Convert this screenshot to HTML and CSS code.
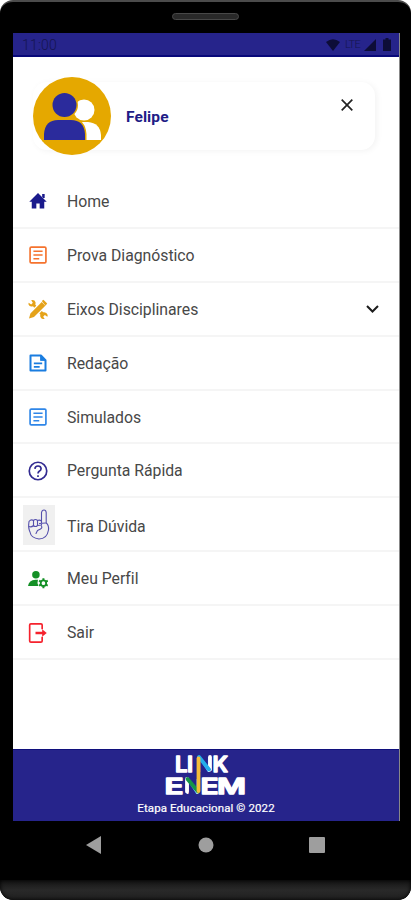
FILE: index.html
```html
<!DOCTYPE html>
<html lang="pt-BR">
<head>
    <meta charset="UTF-8">
    <meta name="viewport" content="width=device-width, initial-scale=1.0">
    <title>Link Enem</title>
    <link rel="stylesheet" href="styles.css">
</head>
<body>
    <div class="phone">
        <div class="phone-top"><span class="speaker"></span></div>

        <div class="screen">
            <div class="status-bar">
                <span class="clock">11:00</span>
                <svg class="wifi" width="14" height="12" viewBox="0 0 14 12"><path d="M0 3Q7-2.500 14 3L7 12z"/></svg>
                <span class="network">LTE</span>
                <svg class="signal" width="12" height="12" viewBox="0 0 12 12"><path d="M12 0v12H0z"/></svg>
                <svg class="battery" width="8" height="13" viewBox="0 0 8 13"><path d="M2.500 0h3v1.500H8V13H0V1.500h2.500z"/></svg>
            </div>

            <div class="profile">
                <svg class="avatar" width="78" height="78" viewBox="0 0 78 78">
                    <circle cx="39" cy="39" r="39" fill="#e5a800"/>
                    <circle cx="51" cy="33" r="10.500" fill="#fff"/>
                    <path d="M40 63V52q2-7 10-7h5q12 1 13 13v5z" fill="#fff"/>
                    <path d="M11 63V57Q12 43 25 43H38Q51 43 52 57V63z" fill="#2b2b9c" stroke="#e5a800" stroke-width="3" paint-order="stroke"/>
                    <circle cx="31.500" cy="28" r="12" fill="#2b2b9c" stroke="#e5a800" stroke-width="3" paint-order="stroke"/>
                </svg>
                <span class="name">Felipe</span>
                <svg class="close" width="12" height="12" viewBox="0 0 12 12"><path d="M.7.7l10.600 10.600M11.300.7L.7 11.300"/></svg>
            </div>

            <ul class="menu">
                <li>
                    <svg class="icon" viewBox="0 0 24 24" fill="#1a1a8c"><path d="M10 21v-6h4v6h5.500v-8H22.500L12 2.500 1.500 13h3v8zM17 3.500h3v5h-3z"/></svg>
                    <span>Home</span>
                </li>
                <li>
                    <svg class="icon" viewBox="0 0 24 24" fill="none" stroke="#f5732e" stroke-width="2"><rect x="2.500" y="2.500" width="19" height="19" rx="1.500"/><path d="M6.500 7.500h11M6.500 12h11M6.500 16.500h7"/></svg>
                    <span>Prova Diagnóstico</span>
                </li>
                <li>
                    <svg class="icon tools" viewBox="0 0 24 24" fill="#e5a31a"><path d="M16.500 5.500l2.500 2.500L6.500 20.500 3 21.500l1-3.500z" stroke="#e5a31a" stroke-width="2.500"/><path d="M16.500 2.500l2-1.500 4.500 4.500-2 2.500z"/><path d="M.8 4.500l3 2 2-2-2-3Q8 .5 9 4q.3 1.500-.3 2.500l1.300 1.500-2.500 2.500-1.500-1.700Q2 10 .8 7q-.4-1.300 0-2.500zM16.500 14.500l1.800 1.500q4-.7 5.200 3 .2 1.300-.3 2.200l-3-2-2 2 2 3q-4.500.2-5.500-3.300-.2-1 .2-2L13.700 17.500z"/></svg>
                    <span>Eixos Disciplinares</span>
                    <svg class="chevron" width="13" height="8" viewBox="0 0 13 8"><path d="M1 1l5.500 5.500L12 1"/></svg>
                </li>
                <li>
                    <svg class="icon" viewBox="0 0 24 24" fill="none" stroke="#1a7de0" stroke-width="2.400"><path d="M3 3h12.500l5.500 5.500V21H3z" stroke-linejoin="round"/><path d="M15 3v6h6z" fill="#1a7de0" stroke-width="1"/><path d="M7 12.500h10M7 16.700h7" stroke-width="2"/></svg>
                    <span>Redação</span>
                </li>
                <li>
                    <svg class="icon" viewBox="0 0 24 24" fill="none" stroke="#2f86e8" stroke-width="2"><rect x="2.500" y="2.500" width="19" height="19" rx="1.500"/><path d="M6.500 7.500h11M6.500 12h11M6.500 16.500h7"/></svg>
                    <span>Simulados</span>
                </li>
                <li>
                    <svg class="icon" viewBox="0 0 24 24" fill="none" stroke="#322a91" stroke-width="2"><circle cx="12" cy="12" r="10.500"/><path d="M8.300 9.500Q8.500 6 12 6t3.700 3.200Q15.700 11 13.500 12.300 12 13.300 12 15M12 17v2.300"/></svg>
                    <span>Pergunta Rápida</span>
                </li>
                <li class="with-thumb">
                    <span class="thumb">
                        <svg width="24" height="34" viewBox="0 0 24 34" fill="none" stroke="#5550ad" stroke-width="1.100" stroke-linecap="round" stroke-linejoin="round">
                            <path d="M14.500 13V4.500Q15 2 17 2t2.200 2.500V15Q22 17 21.500 22 20 31 12 31 4 30 3 24 1 20 2 13.500q2-2.500 4.500-1 2-2 4 0 2-1 4 .5z"/>
                            <path d="M6.500 12.500v5q-2 2-4.500 1M10.500 12.500v5q-2 2-4 0M14.500 13v4l-4 .5M18.500 15l-6 .5M14.500 18q1 2-1 3l-3 1.500-1.500 3"/>
                        </svg>
                    </span>
                    <span>Tira Dúvida</span>
                </li>
                <li>
                    <svg class="icon" viewBox="0 0 24 24" fill="#149026"><circle cx="9.500" cy="7" r="4.500"/><path d="M0 20.500Q1 13.500 9 13h3q-1.500 3.500.5 7.500z"/><circle cx="18.500" cy="17" r="3.300" fill="none" stroke="#149026" stroke-width="2.200"/><path d="M18.500 11v3M18.500 20v3M13.300 14l2.600 1.500M21.100 18.500l2.600 1.500M13.300 20l2.600-1.500M21.100 15.500l2.600-1.500" stroke="#149026" stroke-width="2.400"/></svg>
                    <span>Meu Perfil</span>
                </li>
                <li>
                    <svg class="icon" viewBox="0 0 24 24" fill="none" stroke="#f5222d" stroke-width="2"><path d="M17 7.500V2.500Q17 1 15.500 1H3.500Q2 1 2 2.500v19Q2 23 3.500 23h12q1.500 0 1.500-1.500v-5"/><path d="M9 12h9" stroke-width="3"/><path d="M17 7.500l5.500 4.500-5.500 4.500z" fill="#f5222d" stroke="none"/></svg>
                    <span>Sair</span>
                </li>
            </ul>

            <div class="footer">
                <svg class="logo" width="82" height="44" viewBox="0 0 82 44">
                    <text x="10 22 31.500 47.500" y="19.500">LI<tspan class="thin">N</tspan>K</text>
                    <text x="-.5" y="41.500" textLength="19" lengthAdjust="spacingAndGlyphs">E</text>
                    <text class="thin" x="20" y="41.500">N</text>
                    <text x="35.500" y="41.500" textLength="18" lengthAdjust="spacingAndGlyphs">E</text>
                    <text x="52" y="41.500" textLength="29" lengthAdjust="spacingAndGlyphs">M</text>
                    <!-- ribbon shared by both N letters -->
                    <g class="ribbon">
                        <path d="M45 5v12.500M22 27v12.500" stroke="#fff"/>
                        <path d="M34 5l10 12.500" stroke="#25aeea"/>
                        <path d="M22.500 27l10.500 12.500" stroke="#169447"/>
                        <path d="M33.500 6.500V39" stroke="#f5bd38"/>
                    </g>
                </svg>
                <p>Etapa Educacional © 2022</p>
            </div>
        </div>

        <div class="nav-bar">
            <svg width="15" height="18" viewBox="0 0 15 18"><path d="M15 0v18L0 9z"/></svg>
            <svg class="nav-home" width="16" height="16" viewBox="0 0 16 16"><circle cx="8" cy="8" r="7.500"/></svg>
            <svg width="16" height="16" viewBox="0 0 16 16"><rect width="16" height="16" rx="1"/></svg>
        </div>
        <div class="phone-bottom"></div>
    </div>
</body>
</html>
```
FILE: styles.css
```css
* {
    box-sizing: border-box;
}

body {
    margin: 0;
    background-color: #ffffff;
    font-family: Roboto, Arial, sans-serif;
}

svg {
    display: block;
    flex: none;
}

.phone {
    display: flex;
    flex-direction: column;
    width: 411px;
    height: 900px;
    background-color: #000000;
    border-top: 2px solid #4b4b4b;
    border-radius: 13px;
    overflow: hidden;
}

.phone-top {
    height: 31px;
    padding-top: 11px;
}

.speaker {
    display: block;
    width: 67px;
    height: 7px;
    margin: 0 auto;
    background-color: #292929;
    border: 1px solid #484848;
    border-radius: 4px;
}

.screen {
    display: flex;
    flex-direction: column;
    width: 387px;
    height: 788px;
    margin-left: 13px;
    background-color: #ffffff;
    border-right: 1px solid #888888;
}

.status-bar {
    display: flex;
    align-items: center;
    height: 24px;
    padding: 1px 8px 0 9px;
    background-color: #26248b;
    border-bottom: 2px solid #08087a;
    color: #15154f;
    fill: #0d0d38;
}

.clock {
    flex: 1;
    font-size: 14px;
    font-weight: 300;
    letter-spacing: 0.2px;
}

.network {
    width: 16px;
    margin: 0 3px 0 5px;
    font-size: 11px;
    font-weight: 300;
    letter-spacing: -0.7px;
}

.battery {
    margin-left: 7px;
}

.profile {
    display: flex;
    align-items: center;
    width: 342px;
    height: 68px;
    margin: 25px 0 0 20px;
    background-color: #ffffff;
    border-radius: 14px;
    box-shadow: 2px 1px 6px rgba(0, 0, 0, 0.05);
}

.name {
    flex: 1;
    margin: 2px 0 0 15px;
    color: #211c86;
    font-size: 15.5px;
    font-weight: 700;
    letter-spacing: 0.1px;
}

.close {
    align-self: flex-start;
    margin: 17px 22px 0 0;
    stroke: #222222;
    stroke-width: 1.7;
}

.menu {
    flex: 1;
    margin: 25px 0 0;
    padding: 0;
    list-style: none;
}

.menu li {
    display: flex;
    align-items: center;
    height: 53.9px;
    padding: 1px 20px 0 15px;
    border-bottom: 2px solid #f5f5f5;
    color: #484848;
    font-size: 15.8px;
    letter-spacing: -0.02px;
}

.icon {
    width: 20px;
    height: 20px;
    margin-right: 19px;
}

.chevron {
    margin-left: auto;
    fill: none;
    stroke: #1c1c1c;
    stroke-width: 2;
}

.menu .with-thumb {
    padding: 2px 0 0 10px;
}

.with-thumb span:last-child {
    margin-top: 2px;
}

.thumb {
    display: flex;
    align-items: center;
    justify-content: center;
    width: 32px;
    height: 40px;
    margin-right: 12px;
    background-color: #f0f0f0;
}

.footer {
    display: flex;
    flex-direction: column;
    align-items: center;
    height: 72px;
    padding-top: 2px;
    background-color: #26248b;
    border-top: 1px solid #10107c;
    color: #ffffff;
}

.footer p {
    margin: 5px 0 0;
    font-size: 11.5px;
    line-height: 14px;
    letter-spacing: 0.1px;
    -webkit-text-stroke: 0.2px #ffffff;
}

.logo {
    overflow: visible;
    fill: #ffffff;
    stroke: #ffffff;
    stroke-width: 1.4;
    stroke-linejoin: round;
    font-family: Inter, Arial, sans-serif;
    font-size: 22px;
    font-weight: 600;
}

.logo .thin {
    stroke: none;
    font-size: 20px;
    font-weight: 300;
}

.ribbon {
    fill: none;
    stroke-width: 3.8;
    stroke-linecap: round;
}

.nav-bar {
    display: flex;
    align-items: center;
    justify-content: space-between;
    height: 59px;
    padding: 0 86px 12px;
    fill: #9e9e9e;
}

.nav-home {
    margin-left: 2px;
}

.phone-bottom {
    height: 20px;
    background: linear-gradient(#141414, #292929 50%, #202020);
    border-radius: 0 0 13px 13px;
    box-shadow: inset 0 0 4px #000000;
}
```
